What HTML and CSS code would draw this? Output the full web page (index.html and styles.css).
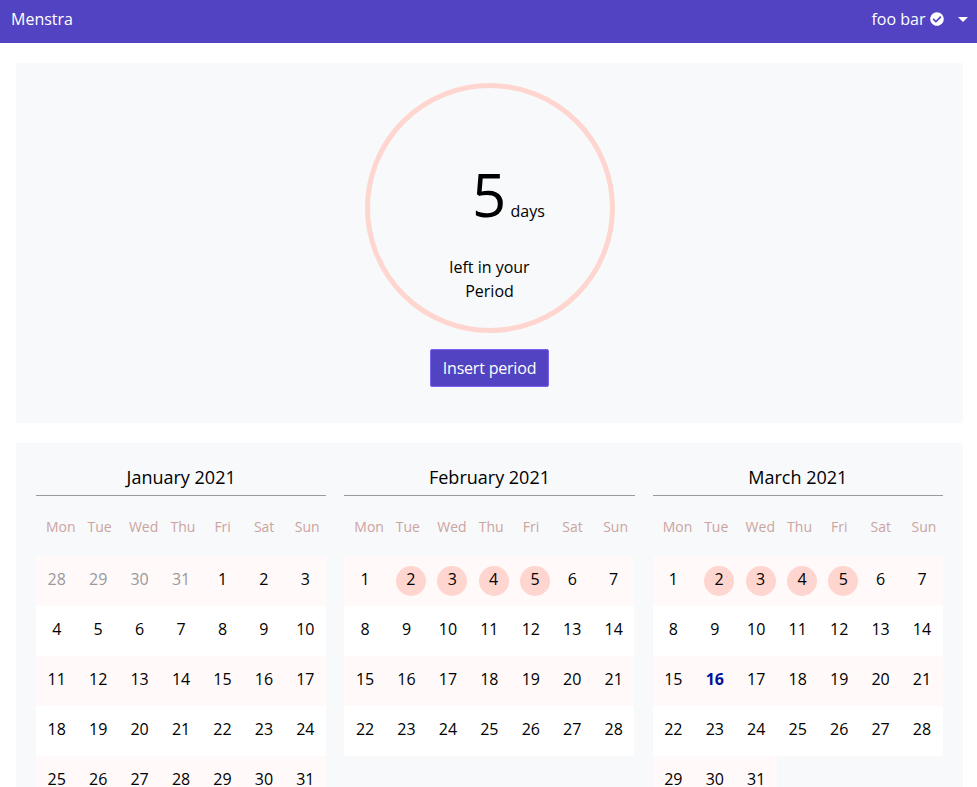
FILE: index.html
```html
<!DOCTYPE html>
<html lang="en">
<head>
<meta charset="utf-8">
<title>Menstra</title>
<link rel="stylesheet" href="styles.css">
</head>
<body>
<nav class="navbar">
  <a class="brand">Menstra</a>
  <div class="user"><span>foo bar</span>
    <svg class="check" viewBox="0 0 512 512"><path fill="#fff" d="M504 256c0 137-111 248-248 248S8 393 8 256 119 8 256 8s248 111 248 248zM227.300 387.300l184-184c6.200-6.200 6.200-16.400 0-22.600l-22.600-22.600c-6.200-6.200-16.400-6.200-22.600 0L216 308.100l-70.100-70.100c-6.200-6.200-16.400-6.200-22.600 0l-22.600 22.600c-6.200 6.200-6.200 16.400 0 22.600l104 104c6.200 6.300 16.400 6.300 22.600.1z"/></svg>
    <span class="caret"></span>
  </div>
</nav>
<main>
  <section class="panel summary">
    <div class="ring">
      <p class="count"><span class="number">5</span> days</p>
      <p class="label">left in your<br>Period</p>
    </div>
    <button class="button">Insert period</button>
  </section>
  <section class="panel calendars" id="calendars"></section>
</main>
<script src="calendar.js"></script>
</body>
</html>
```
FILE: styles.css
```css
* { box-sizing: border-box; }
html, body { height: 100%; }
body {
  margin: 0;
  overflow: hidden;
  background: #fff;
  color: #000;
  font: 16px/24px "Open Sans", "Noto Sans", sans-serif;
}
p, h2 { margin: 0; font-weight: 400; }
.navbar {
  display: flex;
  justify-content: space-between;
  height: 43px;
  padding: 7px 9px 0 11px;
  background: #5243c2;
  color: #fff;
}
.user { display: flex; height: 24px; align-items: center; }
.check { width: 14px; height: 14px; margin-left: 4.5px; }
.caret {
  margin-left: 14px;
  border: 5px solid transparent;
  border-top-color: #fff;
  border-bottom: 0;
}
main { padding: 20px 14px 0 16px; }
.panel { background: #f8f9fb; margin-bottom: 20px; }
.summary {
  display: flex;
  flex-direction: column;
  align-items: center;
  height: 360px;
  padding-top: 20px;
}
.ring {
  width: 250px;
  height: 250px;
  padding-top: 69px;
  border: 5px solid #ffd5cf;
  border-radius: 50%;
  text-align: center;
}
.count { height: 98px; padding-left: 38px; line-height: 75px; }
.number { font-size: 60px; }
.button {
  width: 119px;
  height: 38px;
  margin-top: 16px;
  padding: 0;
  border: 1px solid #7c60ee;
  border-radius: 2px;
  background: #5243c2;
  color: #fff;
  font: inherit;
  letter-spacing: -0.2px;
}
.calendars {
  display: grid;
  grid-template-columns: repeat(3, 290.330px);
  gap: 18px;
  padding: 20px;
}
.month-name {
  height: 33px;
  padding-top: 2px;
  border-bottom: 1px solid #9b9b9f;
  font-size: 18px;
  text-align: center;
}
.weekdays {
  display: grid;
  grid-template-columns: repeat(7, minmax(0, 1fr));
  height: 60px;
  padding-top: 19px;
  color: #cca49f;
  font-size: 14px;
}
.weekdays span { padding: 0 10px; text-align: center; }
.weeks { width: 290.100px; }
.week { display: grid; grid-template-columns: repeat(7, minmax(0, 1fr)); height: 50px; }
.day {
  display: flex;
  justify-content: center;
  padding-top: 10px;
  background: #fff;
}
.week:nth-child(odd) .day { background: #fff9f9; }
.day span { flex: none; width: 30px; height: 30px; line-height: 27px; text-align: center; }
.outside { color: #999; }
.week .marked { justify-content: flex-start; padding-left: 10px; }
.marked span { position: relative; z-index: 1; }
.marked span::before {
  content: "";
  position: absolute;
  z-index: -1;
  inset: 0;
  border-radius: 50%;
  background: #ffd5cf;
}
.today { color: #00129a; font-weight: 700; }
```
FILE: calendar.js
```js
const months = [
  { name: "January 2021", before: [28, 29, 30, 31], days: 31, marked: [] },
  { name: "February 2021", before: [], days: 28, marked: [2, 3, 4, 5] },
  { name: "March 2021", before: [], days: 31, marked: [2, 3, 4, 5], today: 16 }
];
const weekdays = ["Mon", "Tue", "Wed", "Thu", "Fri", "Sat", "Sun"];
document.getElementById("calendars").innerHTML = months.map(m => {
  const cells = m.before.map(d => `<div class="day outside"><span>${d}</span></div>`);
  for (let d = 1; d <= m.days; d++) {
    const state = m.marked.includes(d) ? " marked" : d === m.today ? " today" : "";
    cells.push(`<div class="day${state}"><span>${d}</span></div>`);
  }
  let weeks = "";
  for (let i = 0; i < cells.length; i += 7) weeks += `<div class="week">${cells.slice(i, i + 7).join("")}</div>`;
  return `<div class="month"><h2 class="month-name">${m.name}</h2><div class="weekdays">${weekdays.map(w => `<span>${w}</span>`).join("")}</div><div class="weeks">${weeks}</div></div>`;
}).join("");
```
